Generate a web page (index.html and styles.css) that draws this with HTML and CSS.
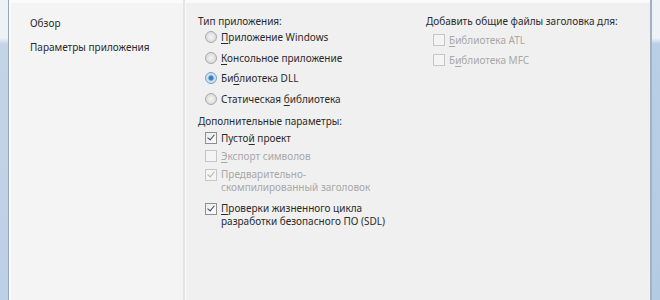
FILE: index.html
```html
<!DOCTYPE html>
<html lang="ru">
<head>
<meta charset="utf-8">
<link rel="stylesheet" href="styles.css">
</head>
<body>
<div class="window">
  <div class="frame frame-left"></div>
  <div class="frame-line"></div>
  <div class="frame-inner"></div>
  <nav class="nav">
    <div class="nav-item">Обзор</div>
    <div class="nav-item">Параметры приложения</div>
  </nav>
  <div class="sep"></div>
  <main class="content">
    <section class="col col-main">
      <div class="group-label">Тип приложения:</div>
      <div class="opt radio-row"><span class="radio"></span><span><u>П</u>риложение Windows</span></div>
      <div class="opt radio-row"><span class="radio"></span><span><u>К</u>онсольное приложение</span></div>
      <div class="opt radio-row"><span class="radio checked"></span><span>Би<u>б</u>лиотека DLL</span></div>
      <div class="opt radio-row"><span class="radio"></span><span>Статическая <u>б</u>иблиотека</span></div>
      <div class="group-label second">Дополнительные параметры:</div>
      <div class="opt"><span class="check checked"></span><span>Пусто<u>й</u> проект</span></div>
      <div class="opt disabled"><span class="check"></span><span><u>Э</u>кспорт символов</span></div>
      <div class="opt disabled multi"><span class="check checked"></span><span>Предварительно-<br>скомпилированный заголовок</span></div>
      <div class="opt multi"><span class="check checked"></span><span><u>П</u>роверки жизненного цикла<br>разработки безопасного ПО (SDL)</span></div>
    </section>
    <section class="col col-side">
      <div class="group-label side-label">Добавить общие файлы заголовка для:</div>
      <div class="opt disabled side-row"><span class="check"></span><span><u>Б</u>иблиотека ATL</span></div>
      <div class="opt disabled side-row"><span class="check"></span><span>Б<u>и</u>блиотека MFC</span></div>
    </section>
  </main>
  <div class="frame-line right"></div>
  <div class="frame frame-right"></div>
</div>
</body>
</html>
```

FILE: styles.css
```css
html, body {
  margin: 0;
  padding: 0;
  width: 660px;
  height: 300px;
  overflow: hidden;
  background: #f0f0f0;
}
.window {
  display: flex;
  width: 660px;
  height: 300px;
  font-family: "Noto Sans", "Open Sans", sans-serif;
  font-size: 10px;
  color: #2b2b2b;
}
.frame {
  width: 8px;
  background: linear-gradient(to bottom, #eef2f6 0, #eef2f6 38px, #c3d4e7 44px, #bcd0e6 100%);
}
.frame-right {
  background: linear-gradient(to bottom, #eef3f8 0, #eef3f8 38px, #b9cfe6 44px, #b4cbe4 100%);
}
.frame-line {
  width: 1px;
  background: #97a6b8;
}
.frame-line.right {
  width: 2px;
  background: #a5b1be;
}
.frame-inner {
  width: 2px;
  background: #fbfcfd;
}
.nav {
  width: 172px;
  background: #f4f4f4;
  padding: 12px 0 0 19px;
  box-sizing: border-box;
  border-top: 3px solid #fafafa;
}
.nav-item {
  height: 24px;
  line-height: 16px;
}
.sep {
  width: 2px;
  background: #e4e4e4;
  border-right: 1px solid #fafafa;
}
.content {
  flex: 1;
  display: flex;
  background: #f0f0f0;
  border-top: 3px solid #fafafa;
  padding: 10px 0 0 12px;
}
.col-main {
  width: 228px;
}
.col-side {
  flex: 1;
}
.group-label {
  line-height: 16px;
  height: 17px;
}
.group-label.second {
  height: 18px;
}
.group-label.side-label {
  height: 20px;
}
.opt {
  display: flex;
  align-items: flex-start;
  gap: 4px;
  padding-left: 7px;
  line-height: 14px;
  height: 18.5px;
}
.opt.radio-row {
  height: 20.67px;
}
.opt.side-row {
  height: 20px;
}
.opt.multi {
  height: 34px;
  line-height: 13.5px;
}
.opt.disabled {
  color: #a8a8a8;
}
.radio {
  flex: none;
  width: 10px;
  height: 10px;
  margin-top: 1px;
  border-radius: 50%;
  border: 1px solid #a9a9a9;
  background: radial-gradient(circle at 50% 50%, #f4f4f4 0, #dcdcdc 70%, #cfcfcf 100%);
  box-sizing: content-box;
  position: relative;
}
.radio.checked {
  border-color: #7a9cbf;
  background: radial-gradient(circle at 50% 50%, #2b6ea8 0, #4a8ecb 30%, #c8dcee 45%, #e6eef6 100%);
}
.check {
  flex: none;
  width: 10px;
  height: 10px;
  margin-top: 1px;
  border: 1px solid #8e8f8f;
  background: linear-gradient(to bottom right, #ebebeb, #fdfdfd);
  position: relative;
}
.opt.disabled .check {
  border-color: #c6c6c6;
  background: #f4f4f4;
}
.check.checked::after {
  content: "";
  position: absolute;
  left: 3px;
  top: 0;
  width: 3px;
  height: 6px;
  border-right: 1.5px solid #3d4a5e;
  border-bottom: 1.5px solid #3d4a5e;
  transform: rotate(40deg);
}
.opt.disabled .check.checked::after {
  border-color: #b4b4b4;
}
u {
  text-decoration-thickness: 1px;
  text-underline-offset: 2px;
}
```
